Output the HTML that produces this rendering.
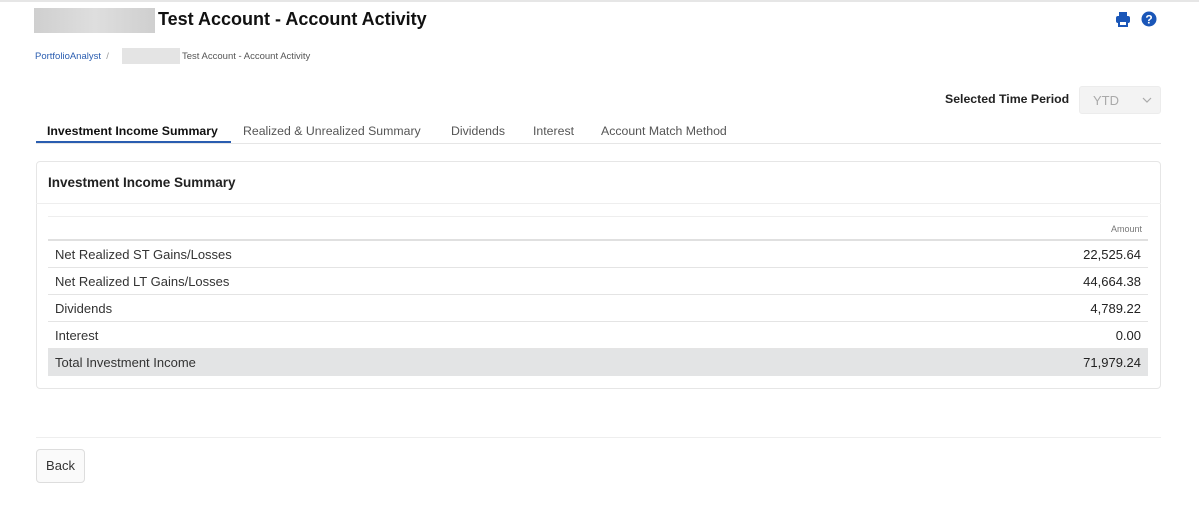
<!DOCTYPE html>
<html><head><style>
*{box-sizing:border-box;margin:0;padding:0}
body{width:1199px;height:520px;background:#fff;font-family:"Liberation Sans",sans-serif;color:#222;position:relative;overflow:hidden}
.abs{position:absolute}
.tab{position:absolute;top:124px;font-size:12.3px;color:#555}
.row{position:absolute;left:48px;width:1100px;height:27px;border-bottom:1px solid #e4e4e4;font-size:13px;color:#333}
.row span{position:absolute;left:7px;top:6px}
.row b{position:absolute;right:7px;top:6px;font-weight:normal;color:#222}
</style></head><body>
<div class="abs" style="left:0;top:0;width:1199px;height:2px;background:#e6e6e6"></div>
<div class="abs" style="left:34px;top:8px;width:121px;height:25px;background:linear-gradient(90deg,#cfcfcf,#dedede,#cfcfcf)"></div>
<div class="abs" style="left:158px;top:9px;font-size:18px;font-weight:bold;color:#111">Test Account - Account Activity</div>
<svg class="abs" style="left:1115px;top:11px" width="16" height="16" viewBox="0 0 16 16"><rect x="4" y="1" width="8" height="4" fill="#1a56b8"/><rect x="1" y="5" width="14" height="7" rx="2" fill="#1a56b8"/><rect x="4" y="10" width="8" height="5" fill="#fff" stroke="#1a56b8" stroke-width="2"/></svg>
<svg class="abs" style="left:1141px;top:11px" width="16" height="16" viewBox="0 0 16 16"><circle cx="8" cy="8" r="7.5" fill="#1a56b8"/><text x="8" y="12.5" font-size="12" font-weight="bold" fill="#fff" text-anchor="middle" font-family="Liberation Sans">?</text></svg>
<div class="abs" style="left:35px;top:51px;font-size:9.5px;color:#2a5db0">PortfolioAnalyst <span style="color:#999">&nbsp;/</span></div>
<div class="abs" style="left:122px;top:48px;width:58px;height:16px;background:#e4e4e4"></div>
<div class="abs" style="left:182px;top:51px;font-size:9.5px;color:#555">Test Account - Account Activity</div>
<div class="abs" style="left:945px;top:92px;font-size:12.3px;font-weight:bold;color:#222">Selected Time Period</div>
<div class="abs" style="left:1079px;top:86px;width:82px;height:28px;background:#f3f3f3;border:1px solid #ececec;border-radius:3px"><span style="position:absolute;left:13px;top:6px;font-size:13px;color:#aaa">YTD</span><svg style="position:absolute;right:8px;top:10px" width="10" height="6" viewBox="0 0 10 6"><path d="M1 1l4 4 4-4" fill="none" stroke="#aaa" stroke-width="1.2"/></svg></div>
<div class="tab" style="left:47px;color:#111;font-weight:bold">Investment Income Summary</div>
<div class="abs" style="left:36px;top:141px;width:195px;height:2px;background:#2a5db0"></div>
<div class="tab" style="left:243px">Realized &amp; Unrealized Summary</div>
<div class="tab" style="left:451px">Dividends</div>
<div class="tab" style="left:533px">Interest</div>
<div class="tab" style="left:601px">Account Match Method</div>
<div class="abs" style="left:36px;top:143px;width:1125px;height:1px;background:#e6e6e6"></div>
<div class="abs" style="left:36px;top:161px;width:1125px;height:228px;border:1px solid #e6e6e6;border-radius:4px"></div>
<div class="abs" style="left:36px;top:203px;width:1125px;height:1px;background:#eee"></div>
<div class="abs" style="left:48px;top:175px;font-size:13.5px;font-weight:bold;color:#222">Investment Income Summary</div>
<div class="abs" style="left:48px;top:216px;width:1100px;height:1px;background:#eee"></div>
<div class="abs" style="left:48px;top:239px;width:1100px;height:2px;background:#e0e0e0"></div>
<div class="abs" style="right:57px;top:224px;font-size:9px;color:#777">Amount</div>
<div class="row" style="top:241px"><span>Net Realized ST Gains/Losses</span><b>22,525.64</b></div>
<div class="row" style="top:268px"><span>Net Realized LT Gains/Losses</span><b>44,664.38</b></div>
<div class="row" style="top:295px"><span>Dividends</span><b>4,789.22</b></div>
<div class="row" style="top:322px"><span>Interest</span><b>0.00</b></div>
<div class="row" style="top:349px;background:#e3e4e5;border:none"><span>Total Investment Income</span><b>71,979.24</b></div>
<div class="abs" style="left:36px;top:437px;width:1125px;height:1px;background:#eee"></div>
<div class="abs" style="left:36px;top:449px;width:49px;height:34px;border:1px solid #ddd;border-radius:4px;background:#fafafa;font-size:13px;color:#333;text-align:center;line-height:32px">Back</div>
</body></html>
